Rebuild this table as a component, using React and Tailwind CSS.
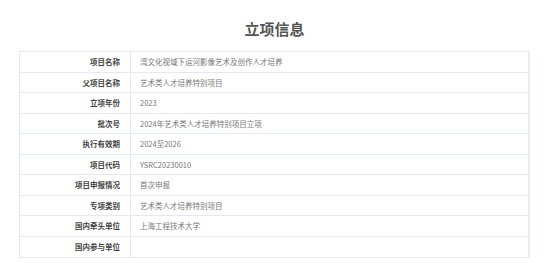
const rows = [
  ["项目名称", "湾文化视域下运河影像艺术及创作人才培养"],
  ["父项目名称", "艺术类人才培养特别项目"],
  ["立项年份", "2023"],
  ["批次号", "2024年艺术类人才培养特别项目立项"],
  ["执行有效期", "2024至2026"],
  ["项目代码", "YSRC20230010"],
  ["项目申报情况", "首次申报"],
  ["专项类别", "艺术类人才培养特别项目"],
  ["国内牵头单位", "上海工程技术大学"],
  ["国内参与单位", ""],
];

export default function App() {
  return (
    <div
      className="w-[549px] h-[263px] bg-white overflow-hidden"
      style={{ fontFamily: '"Noto Sans CJK SC", "Noto Sans", sans-serif' }}
    >
      <h1 className="pt-[19px] h-[51px] text-center text-[15px] leading-[20px] font-bold text-[#555]">
        立项信息
      </h1>
      <div className="ml-[19px] w-[510px] border border-[#e4e8f0] shadow-[1px_0_1px_#eef0f5]">
        {rows.map(([label, value], i) => (
          <div
            key={label}
            className={`flex h-[20.5px] ${i < rows.length - 1 ? "border-b border-[#e4e8f0]" : ""}`}
          >
            <div className="w-[111px] shrink-0 border-r border-[#e4e8f0] pr-[10px] flex items-center justify-end text-[7.5px] font-bold text-[#444]">
              {label}
            </div>
            <div className="flex-1 pl-[9px] flex items-center text-[7.5px] text-[#777]">
              {value}
            </div>
          </div>
        ))}
      </div>
    </div>
  );
}
